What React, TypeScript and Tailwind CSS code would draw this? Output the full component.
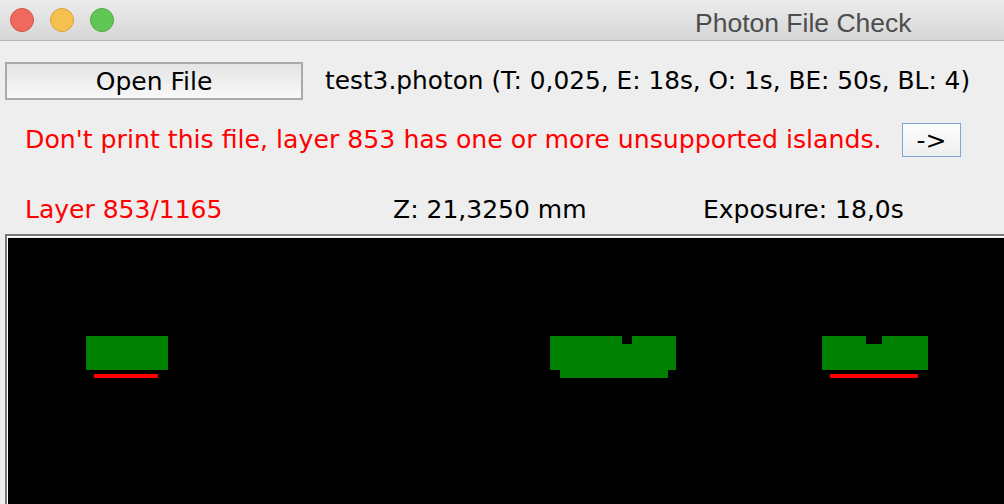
import React from "react";

const ui = { fontFamily: '"DejaVu Sans", "Liberation Sans", sans-serif' };
const title = { fontFamily: '"Liberation Sans", Arial, sans-serif' };

// island shapes on the layer preview, in canvas coordinates
type Box = { x: number; y: number; w: number; h: number; c: string };
const shapes: Box[] = [
  { x: 86, y: 336, w: 82, h: 34, c: "#008000" },
  { x: 94, y: 374, w: 64, h: 4, c: "#ff0000" },
  { x: 550, y: 336, w: 126, h: 34, c: "#008000" },
  { x: 560, y: 370, w: 108, h: 8, c: "#008000" },
  { x: 622, y: 336, w: 10, h: 8, c: "#000000" },
  { x: 822, y: 336, w: 106, h: 34, c: "#008000" },
  { x: 866, y: 336, w: 16, h: 8, c: "#000000" },
  { x: 830, y: 374, w: 88, h: 4, c: "#ff0000" },
];

function TrafficLight({ color, ring }: { color: string; ring: string }) {
  return (
    <span
      className="block w-[24px] h-[24px] rounded-full border"
      style={{ background: color, borderColor: ring }}
    />
  );
}

export default function App() {
  const canvasTop = 238;
  const canvasLeft = 8;
  return (
    <div className="w-[1004px] h-[504px] overflow-hidden bg-[#eeeeee] flex flex-col">
      <div className="h-[41px] shrink-0 flex items-center bg-gradient-to-b from-[#ececec] to-[#d6d6d6] border-b border-[#b3b3b3] relative">
        <div className="flex items-center gap-[16px] pl-[10px]">
          <TrafficLight color="#ee6a5f" ring="#d5524a" />
          <TrafficLight color="#f6c04f" ring="#d9a33a" />
          <TrafficLight color="#62c655" ring="#4fa842" />
        </div>
        <span className="absolute left-[695px] top-[4px] text-[26.5px] text-[#4d4d4d]" style={title}>
          Photon File Check
        </span>
      </div>

      <div className="flex-1 flex flex-col pt-[21px] pl-[5px]" style={ui}>
        <div className="flex items-center h-[38px]">
          <button className="w-[298px] h-[38px] border-2 border-[#aaaaaa] bg-gradient-to-b from-[#e4e4e4] to-[#f8f8f8] text-[25px] text-black leading-none">
            Open File
          </button>
          <span className="ml-[22px] text-[24.8px] text-black whitespace-nowrap">
            test3.photon (T: 0,025, E: 18s, O: 1s, BE: 50s, BL: 4)
          </span>
        </div>

        <div className="flex items-center h-[34px] mt-[23px]">
          <span className="pl-[20px] w-[897px] text-[25.2px] text-[#ff0000] whitespace-nowrap">
            Don't print this file, layer 853 has one or more unsupported islands.
          </span>
          <button className="w-[59px] h-[34px] border border-[#7ba7d9] bg-gradient-to-b from-[#fdfdfd] to-[#eeeeee] text-[25px] text-black leading-none">
            -&gt;
          </button>
        </div>

        <div className="flex items-center h-[34px] mt-[36px] text-[25px] text-black whitespace-nowrap">
          <span className="pl-[20px] w-[388px] text-[#ff0000]">Layer 853/1165</span>
          <span className="w-[310px]">Z: 21,3250 mm</span>
          <span>Exposure: 18,0s</span>
        </div>

        <div className="flex-1 mt-[7px] border-t-2 border-l-2 border-[#777777]">
          <div className="h-full border-t border-l border-white pt-[1px]">
            <div className="relative h-full bg-black">
              {shapes.map((s, i) => (
                <div
                  key={i}
                  className="absolute"
                  style={{
                    left: s.x - canvasLeft,
                    top: s.y - canvasTop,
                    width: s.w,
                    height: s.h,
                    background: s.c,
                  }}
                />
              ))}
            </div>
          </div>
        </div>
      </div>
    </div>
  );
}
